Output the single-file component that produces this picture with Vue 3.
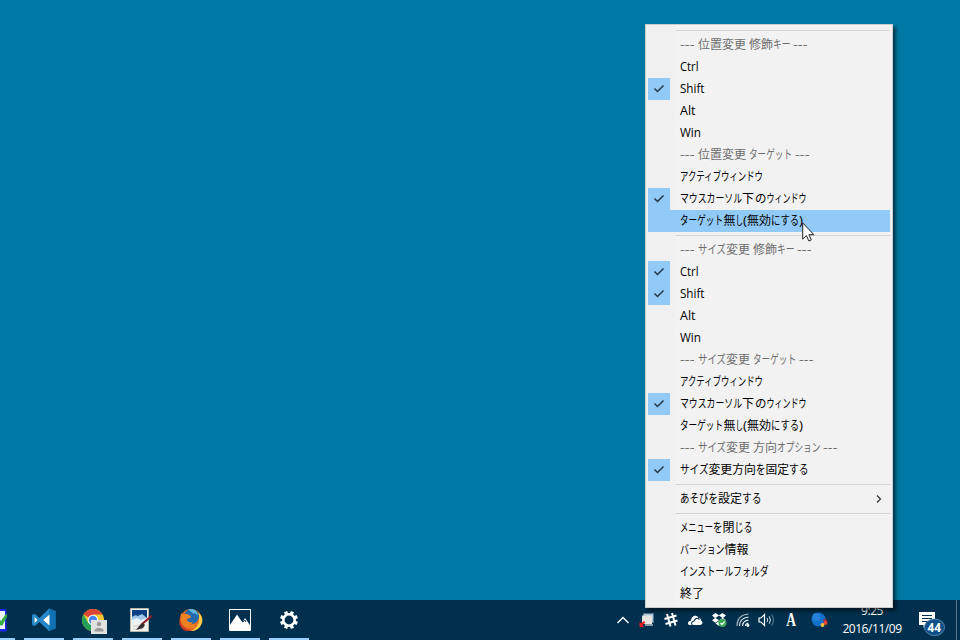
<script setup>
const kana = {
  target: ['ターゲット', 43],
  henkou: ['変更', 24],
}
const dash = (x) => ['---', x, 14.5]
const target = (x) => [kana.target[0], x, kana.target[1]]
const size = (x) => [['サイズ', x, 28], [kana.henkou[0], x + 28, kana.henkou[1]]]
const latin = { Ctrl: 18.5, Shift: 24.5, Alt: 15.5, Win: 21 }
const key = (name, checked = false) => ({ runs: [[name, 0, latin[name]]], checked })
const active = { runs: [['アクティブウィンドウ', 0, 83]] }
const underMouse = {
  checked: true,
  runs: [['マウスカーソル', 0, 62], ['下', 62, 12], ['の', 75, 11.5], ['ウィンドウ', 86.5, 40]],
}
const noTarget = (hot = false) => ({
  hot,
  runs: [target(0), ['無', 43.5, 12], ['し', 55.5, 7.5], ['(', 63, 4], ['無効', 67, 24], ['にする', 91, 28], [')', 119, 4]],
})

// Each run: text, x offset in the label, advance width
const rows = [
  { sep: true },
  { head: true, runs: [dash(0), ['位置変更', 18, 48], ['修飾', 69, 24], ['キー', 93, 17.5], dash(113)] },
  key('Ctrl'),
  key('Shift', true),
  key('Alt'),
  key('Win'),
  { head: true, runs: [dash(0), ['位置変更', 18, 48], target(69), dash(115)] },
  active,
  underMouse,
  noTarget(true),
  { sep: true },
  { head: true, runs: [dash(0), ...size(18), ['修飾', 73, 24], ['キー', 97, 17.5], dash(117)] },
  key('Ctrl', true),
  key('Shift', true),
  key('Alt'),
  key('Win'),
  { head: true, runs: [dash(0), ...size(18), target(73), dash(119)] },
  active,
  underMouse,
  noTarget(),
  { head: true, runs: [dash(0), ...size(18), ['方向', 73, 24], ['オプション', 97, 43.5], dash(143)] },
  { checked: true, runs: [['サイズ', 0, 28.5], ['変更方向', 28.5, 47.5], ['を', 76, 9.5], ['固定', 85.5, 23.5], ['する', 109, 19.5]] },
  { sep: true },
  { sub: true, runs: [['あそびを', 0, 38], ['設定', 38, 24], ['する', 62, 19.5]] },
  { sep: true },
  { runs: [['メニュー', 0, 33], ['を', 33, 9.5], ['閉', 42.5, 12], ['じる', 54.5, 18]] },
  { runs: [['バージョン', 0, 44.5], ['情報', 44.5, 24]] },
  { runs: [['インストールフォルダ', 0, 88.5]] },
  { runs: [['終了', 0, 24]] },
]
</script>

<template>
  <main class="desktop">
    <footer class="taskbar">
      <nav class="apps">
        <div class="app first">
          <svg width="15" height="40" viewBox="0 0 15 40">
            <path d="M0 9h6.500v22.500H0z" fill="#1e28e8" /><path d="M0 11h5v18H0z" fill="#eef4ff" />
            <path d="M0 20l1 1 4-6 2-1v3l-5 9-2-1z" fill="#35ae42" />
          </svg>
        </div>
        <div class="app">
          <svg width="40" height="40" viewBox="0 0 40 40">
            <path fill-rule="evenodd" fill="#2489ca" d="M25 8.500l6.500 2.500v17.500L25 31l-9.500-9-5 4.200-2.500-1.500V15l2.500-1.300 5 4.200zM25 15l-6 5 6 5zM10.500 17v6l3-3z" />
            <path d="M25 8.500l6.500 2.500v17.500L25 31z" fill="#1070b3" />
            <path d="M25.500 14.500v11L19 20zM10.500 16.800v6.400l3-3.200z" fill="#fff" />
          </svg>
        </div>
        <div class="app">
          <svg width="40" height="40" viewBox="0 0 40 40">
            <circle cx="20" cy="20" r="11" fill="#f2ca2f" />
            <path d="M20 20L10.500 14.500A11 11 0 0 1 29.500 14.500H20z" fill="#dc4437" />
            <path d="M10.500 14.500A11 11 0 0 0 19 31l5-8.500-4 2-5-2z" fill="#23a05a" />
            <circle cx="20" cy="20" r="5.300" fill="#fff" /><circle cx="20" cy="20" r="4.200" fill="#4587ee" />
            <path d="M18 20h16v14H18z" fill="#e1e1e1" />
            <circle cx="26" cy="24" r="2.200" fill="#999" /><path d="M21.500 31.500v-1.800q4.500-4 9 0v1.800z" fill="#999" />
          </svg>
        </div>
        <div class="app">
          <svg width="40" height="40" viewBox="0 0 40 40">
            <path d="M8.500 8.500h18v23h-18z" fill="#f2f2ee" stroke="#b9b5aa" />
            <path d="M10 10h15v13H10z" fill="#0d4082" />
            <path d="M10 17q3-3 6-1l4-2 5 4v5H10z" fill="#9ec5e9" /><path d="M10 20l5-2 4 2 6-2v5H10z" fill="#e9f4ff" />
            <path d="M11 26h7M11 29h10" stroke="#c2c5cb" />
            <path d="M30 15.500L19 25" stroke="#902025" stroke-width="2.200" />
            <path d="M21 23l-3 2-4 5 7-2 2-3z" fill="#343033" />
          </svg>
        </div>
        <div class="app">
          <svg width="40" height="40" viewBox="0 0 40 40">
            <circle cx="20" cy="20" r="11" fill="#e66b1f" />
            <path d="M25 11q8 5 6 12-3 8-11 8 8-4 8-11 0-5-3-9z" fill="#f9cd43" />
            <circle cx="20.500" cy="16.500" r="7.500" fill="#2269ad" />
            <path d="M17 9.500q8-2 10 6-3-3-5-2-2-2-5-4z" fill="#63bde3" />
            <path d="M10 13l2 2q2-2 4-1l4 2-1 2-3 1q0 4 6 3-2 4-6 2 5 3 9-1l-3 5-8-1-5-7z" fill="#f08222" />
            <path d="M9.800 15q-2 8 3 12 5 4 9 3-8 3-12-3-3-5 0-12z" fill="#cf3825" />
          </svg>
        </div>
        <div class="app">
          <svg width="40" height="40" viewBox="0 0 40 40">
            <path d="M9.500 9.500h21v21h-21z" fill="none" stroke="#fff" />
            <path d="M10 25l7-10.500 5.500 8 2.500-4.500 5.500 8V31H10z" fill="#fff" />
            <path d="M23 22l2-2 1 2" fill="none" stroke="#00304d" stroke-width=".8" />
          </svg>
        </div>
        <div class="app">
          <svg width="40" height="40" viewBox="0 0 40 40">
            <circle cx="20" cy="20" r="5.700" fill="none" stroke="#fff" stroke-width="2.600" />
            <g stroke="#fff" stroke-width="3.400">
              <path v-for="a in 8" :key="a" d="M20 11v3" :transform="`rotate(${a * 45 + 22.5} 20 20)`" />
            </g>
          </svg>
        </div>
      </nav>

      <div class="tray">
        <svg class="ico" viewBox="0 0 24 24"><path d="M6.500 15L12 9.500l5.500 5.500" fill="none" stroke="#fff" stroke-width="1.400" /></svg>
        <svg class="ico" viewBox="0 0 24 24">
          <path d="M8.500 5.500h10v9h-10z" fill="#a8c8df" stroke="#547890" /><path d="M7 7.500h10V16H7z" fill="#e8e5df" />
          <path d="M10 16h8v2h-8z" fill="#8c9da8" />
          <path d="M4.500 19v-5l1.500 1.500L9 13l1.500 1.500L7.500 17 9 19z" fill="#ed1b20" />
        </svg>
        <svg class="ico" viewBox="0 0 24 24">
          <path d="M8 6l3.500 12.500M13 5l3.500 12.500M5.500 11l12-3.500M6.500 16l12-3.500" fill="none" stroke="#fff" stroke-width="2" />
        </svg>
        <svg class="ico" viewBox="0 0 24 24">
          <path d="M5 15.500c0-2 1.500-3 3-2.700C8 8 14 6 15.500 10c2 0 2.500 1 2.500 2.500 2.500 1 1.500 4.500-1 4.500H8q-3 0-3-1.500z" fill="#fff" />
          <path d="M9.500 17.500q-2.500-3.500 1.500-4.500 2-4.500 5.500-1.500" fill="none" stroke="#00304d" stroke-width="1.100" />
        </svg>
        <svg class="ico" viewBox="0 0 24 24">
          <path d="M8.500 5l3.500 2.300 3.500-2.300L19 7.500 16 10l3 2.300-3.500 2.400-3.500-2.400-3.500 2.400L5 12.300 8 10 5 7.500z" fill="#fff" />
          <path d="M8.500 9.900L12 7.600l3.500 2.300-3.500 2.300z" fill="#00304d" /><path d="M8.500 15.500l3.500-2.300 3.500 2.300-3.500 2.500z" fill="#fff" />
          <circle cx="15.500" cy="15" r="4" fill="#35a853" /><path d="M13.500 15l1.400 1.500 2.800-3" fill="none" stroke="#fff" stroke-width="1.200" />
        </svg>
        <svg class="ico" viewBox="0 0 24 24">
          <g fill="none" stroke="#fff" stroke-width="1.200">
            <path d="M14.500 18q0-2.500 3-3" /><path d="M11.500 18q0-5 6-6" /><path d="M8.500 18q0-8 9-9" opacity=".9" /><path d="M6 18Q6 7 17.500 6" opacity=".65" />
          </g>
          <circle cx="17" cy="17.500" r="1.400" fill="#fff" />
        </svg>
        <svg class="ico" viewBox="0 0 24 24">
          <path d="M4 10h2l3.500-3.500v11L6 14H4z" fill="none" stroke="#fff" stroke-width="1.200" />
          <path d="M12 10q1.500 2 0 4M14.200 8.300q2.500 3.700 0 7.400" fill="none" stroke="#dce7ed" />
          <path d="M16.500 6.500q4 5.500 0 11" fill="none" stroke="#64849a" />
        </svg>
        <span class="ime">A</span>
        <svg class="ico last" viewBox="0 0 24 24">
          <circle cx="11.500" cy="11.500" r="7" fill="#1170ca" /><circle cx="9.500" cy="9" r="4" fill="#2582d8" />
          <circle cx="18" cy="12.500" r="1.800" fill="#9f344a" /><circle cx="18.500" cy="15" r="2" fill="#e64732" /><circle cx="15.500" cy="17" r="1.900" fill="#ffc442" />
        </svg>
        <div class="clock"><span>9:25</span><span>2016/11/09</span></div>
        <svg class="notice" width="30" height="30" viewBox="0 0 30 30">
          <path d="M2 2h16v13h-8l-3.500 3v-3H2z" fill="#fff" />
          <path d="M5 5.500h10M5 8.500h10M5 11.500h6" stroke="#00304d" />
          <ellipse cx="17.500" cy="17.300" rx="10" ry="8.300" fill="#0e4f87" stroke="#5687b2" />
          <text x="10.500" y="21.800" textLength="13.500" lengthAdjust="spacingAndGlyphs" class="count">44</text>
        </svg>
      </div>
      <div class="peek"></div>
    </footer>

    <section class="menu">
      <template v-for="(row, i) in rows" :key="i">
        <div v-if="row.sep" class="sep"></div>
        <div v-else class="row" :class="{ head: row.head, hot: row.hot }">
          <span class="check" :class="{ on: row.checked }">
            <svg v-if="row.checked" width="22" height="22" viewBox="0 0 22 22">
              <path d="M6.500 10.500l3 3 6-6" fill="none" stroke="#23394a" stroke-width="1.500" />
            </svg>
          </span>
          <svg class="label" width="190" height="22">
            <text
              v-for="(run, j) in row.runs" :key="j" :x="run[1]" y="15"
              :textLength="run[2]" lengthAdjust="spacingAndGlyphs"
            >{{ run[0] }}</text>
          </svg>
          <svg v-if="row.sub" class="arrow" width="8" height="10" viewBox="0 0 8 10">
            <path d="M2 1.500L5.500 5 2 8.500" fill="none" stroke="#333" stroke-width="1.200" />
          </svg>
        </div>
      </template>
    </section>

    <svg class="cursor" width="14" height="20" viewBox="0 0 14 20">
      <path d="M.7.900v16.200l3.700-3.500 2.500 5.400 2.400-1.100-2.400-5.200h5z" fill="#fff" stroke="#222" stroke-width="1" />
    </svg>
  </main>
</template>

<style>
body { margin: 0; }
</style>

<style scoped>
.desktop {
  position: relative;
  display: flex;
  flex-direction: column;
  justify-content: flex-end;
  width: 960px;
  height: 640px;
  overflow: hidden;
  background: #0078a4;
  font-family: "Open Sans", "Noto Sans CJK JP", sans-serif;
}
.desktop svg { display: block; flex: none; }
.taskbar { display: flex; height: 40px; background: #00304d; }
.apps { display: flex; gap: 9px; }
.app { width: 40px; height: 40px; box-shadow: inset 0 -2px #99d0fa; }
.app.first { width: 15px; }
.tray { display: flex; align-items: center; margin-left: auto; }
.ico { width: 24px; height: 24px; }
.last { margin-left: 4px; }
.ime {
  width: 24px;
  color: #fff;
  font: bold 18px/24px "Liberation Serif", serif;
  text-align: center;
  transform: scaleX(.75);
}
.clock {
  display: flex;
  flex-direction: column;
  align-items: center;
  width: 60px;
  margin-left: 11px;
  color: #fff;
  font-size: 12px;
  line-height: 18px;
  letter-spacing: -.45px;
  white-space: nowrap;
}
.notice { margin: 10px 9px 0 15px; }
.count { fill: #fff; font: bold 12px "Open Sans", sans-serif; }
.peek { width: 3px; border-left: 1px solid #53758a; }
.menu {
  position: absolute;
  left: 645px;
  top: 24px;
  box-sizing: border-box;
  width: 248px;
  height: 584px;
  padding: 2px;
  border: 1px solid #ccc;
  background: linear-gradient(90deg, #f0f0f0 29px, #f2f2f2 29px);
  box-shadow: 3px 3px 3px rgba(0, 0, 0, .5);
}
.sep { height: 7px; padding: 3px 0 3px 28px; box-sizing: border-box; }
.sep::before { content: ""; display: block; height: 1px; background: #d2d2d2; }
.row { display: flex; align-items: center; height: 22px; }
.hot { background: #91c9f7; }
.check { width: 22px; height: 22px; margin-right: 10px; }
.on { background: #91c9f7; }
.label { fill: #000; font-size: 12px; overflow: visible; margin-right: 5px; }
.head .label { fill: #6d6d6d; }
.cursor { position: absolute; left: 802px; top: 222px; }
</style>
